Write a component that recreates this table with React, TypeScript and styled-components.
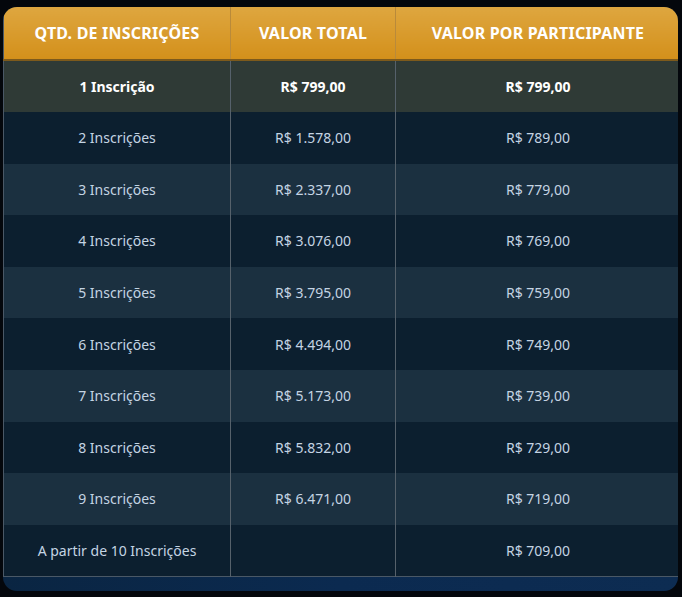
import styled, { createGlobalStyle } from 'styled-components'

const rows = [
  { qtd: '2 Inscrições', total: 'R$ 1.578,00', each: 'R$ 789,00' },
  { qtd: '3 Inscrições', total: 'R$ 2.337,00', each: 'R$ 779,00' },
  { qtd: '4 Inscrições', total: 'R$ 3.076,00', each: 'R$ 769,00' },
  { qtd: '5 Inscrições', total: 'R$ 3.795,00', each: 'R$ 759,00' },
  { qtd: '6 Inscrições', total: 'R$ 4.494,00', each: 'R$ 749,00' },
  { qtd: '7 Inscrições', total: 'R$ 5.173,00', each: 'R$ 739,00' },
  { qtd: '8 Inscrições', total: 'R$ 5.832,00', each: 'R$ 729,00' },
  { qtd: '9 Inscrições', total: 'R$ 6.471,00', each: 'R$ 719,00' },
  { qtd: 'A partir de 10 Inscrições', total: '', each: 'R$ 709,00' },
]

const Global = createGlobalStyle`
  html, body {
    margin: 0;
    background: #04070c;
    font-family: "Noto Sans", "Open Sans", sans-serif;
  }
`

const Wrapper = styled.div`
  margin: 7px 4px 0 3px;
  width: 675px;
  padding-bottom: 14px;
  border-radius: 14px;
  overflow: hidden;
  background: linear-gradient(90deg, #0a2542 0%, #0b2a50 50%, #0d2c52 100%);
`

const Table = styled.table`
  width: 674px;
  border-collapse: collapse;
  table-layout: fixed;
  border-bottom: 1px solid #4a5866;
  border-left: 1px solid #4a5866;
  border-right: 1px solid #4a5866;
`

const Th = styled.th<{ $w: number }>`
  width: ${p => p.$w}px;
  height: 52px;
  padding: 0;
  background: linear-gradient(180deg, #dea63f 0%, #d3901b 100%);
  border-bottom: 2px solid #7d5a1c;
  border-left: 1px solid #b98a3a;
  color: #ffffff;
  font-size: 16px;
  font-weight: 700;
  letter-spacing: 0.2px;
  text-align: center;
  &:first-child { border-left: none; }
`

const Tr = styled.tr<{ $tone: 'top' | 'dark' | 'light' }>`
  height: ${p => (p.$tone === 'top' ? 52 : 51.6)}px;
  background: ${p =>
    p.$tone === 'top' ? '#2f3a36' : p.$tone === 'light' ? '#1b3040' : '#0c1f2f'};
  color: ${p => (p.$tone === 'top' ? '#ffffff' : '#c4d4e3')};
  font-weight: ${p => (p.$tone === 'top' ? 700 : 400)};
`

const Td = styled.td`
  padding: 0;
  text-align: center;
  font-size: 14px;
  border-left: 1px solid #56616b;
  &:first-child { border-left: none; }
`

export default function App() {
  return (
    <>
      <Global />
      <Wrapper>
        <Table>
          <thead>
            <tr>
              <Th $w={226}>QTD. DE INSCRIÇÕES</Th>
              <Th $w={164}>VALOR TOTAL</Th>
              <Th $w={284}>VALOR POR PARTICIPANTE</Th>
            </tr>
          </thead>
          <tbody>
            <Tr $tone="top">
              <Td>1 Inscrição</Td>
              <Td>R$ 799,00</Td>
              <Td>R$ 799,00</Td>
            </Tr>
            {rows.map((r, i) => (
              <Tr key={r.qtd} $tone={i % 2 === 0 ? 'dark' : 'light'}>
                <Td>{r.qtd}</Td>
                <Td>{r.total}</Td>
                <Td>{r.each}</Td>
              </Tr>
            ))}
          </tbody>
        </Table>
      </Wrapper>
    </>
  )
}
